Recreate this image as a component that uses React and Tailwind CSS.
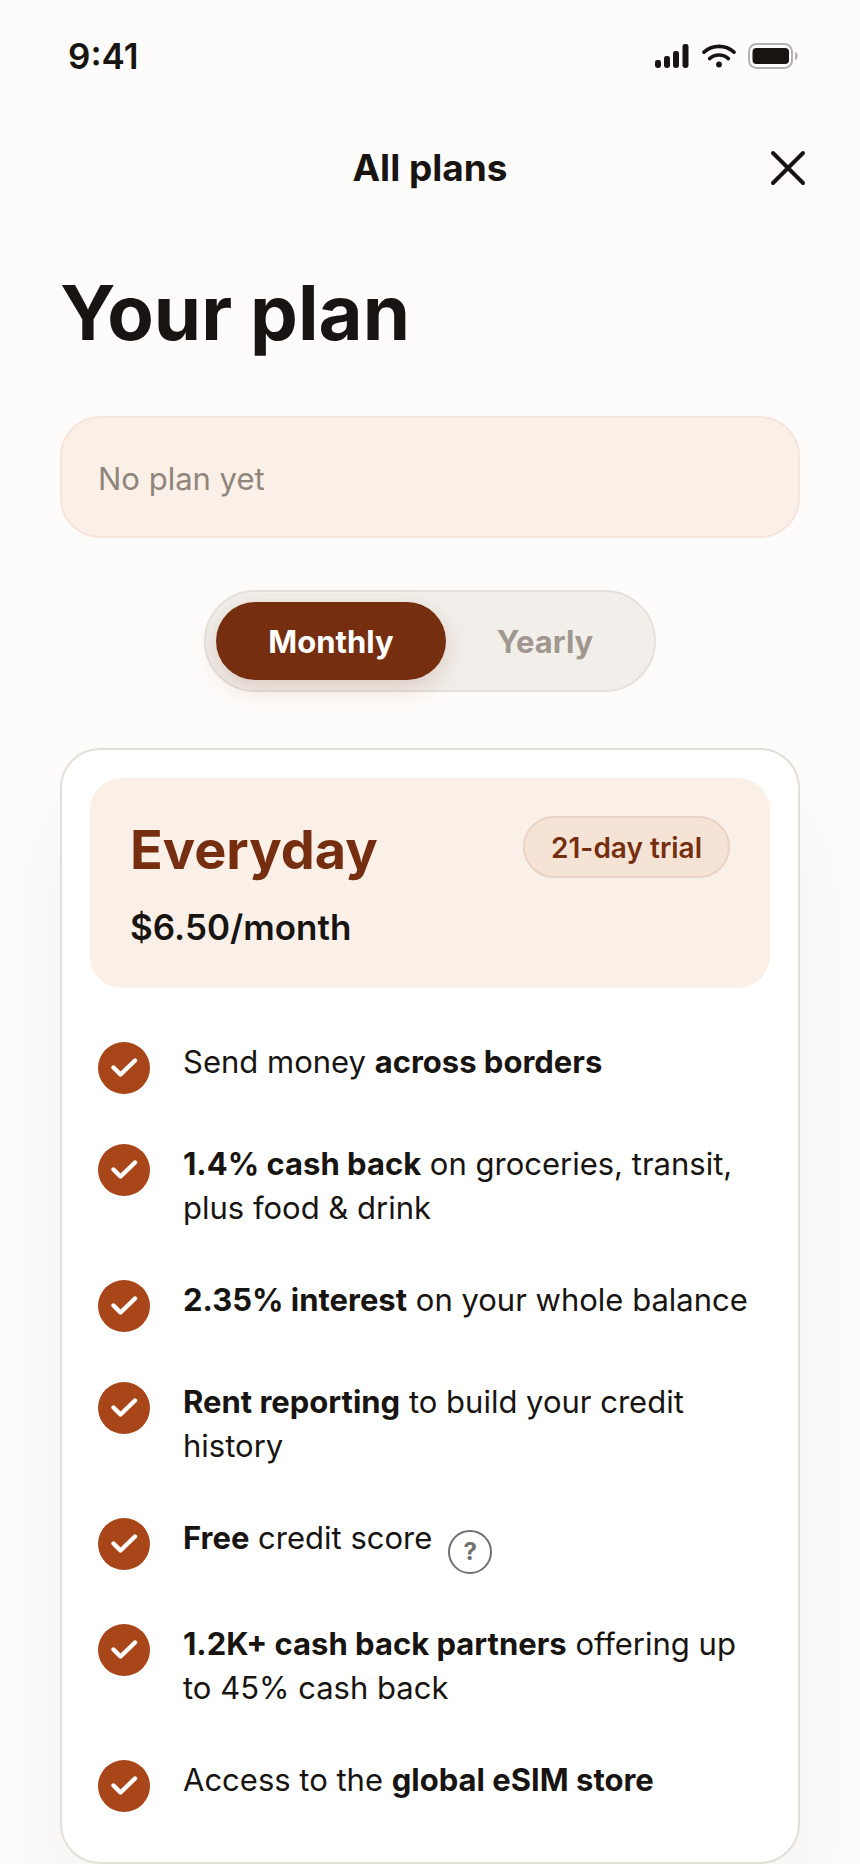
import React, { useState } from 'react';

const features = [
  { text: <>Send money <b className="font-bold">across borders</b></> },
  { text: <><b className="font-bold">1.4% cash back</b> on groceries, transit, plus food &amp; drink</> },
  { text: <><b className="font-bold">2.35% interest</b> on your whole balance</> },
  { text: <><b className="font-bold">Rent reporting</b> to build your credit history</> },
  { text: <><b className="font-bold">Free</b> credit score</>, help: true },
  { text: <><b className="font-bold">1.2K+ cash back partners</b> offering up to 45% cash back</> },
  { text: <>Access to the <b className="font-bold">global eSIM store</b></> }
];

const periods = [
  { id: 'monthly', label: 'Monthly', width: 'w-[230px]' },
  { id: 'yearly', label: 'Yearly', width: 'w-[198px]' }
];

const StatusBar = () => (
  <div className="flex h-28 items-center justify-between pr-[61px] pl-[68px]">
    <span className="text-[35px] leading-10 font-semibold">9:41</span>
    <div className="flex items-center gap-3">
      <svg width="35" height="26" viewBox="0 0 35 26" fill="currentColor" aria-hidden="true">
        <rect x="0" y="17" width="6" height="8" rx="2.4" />
        <rect x="9" y="13" width="6" height="12" rx="2.4" />
        <rect x="18" y="8" width="6" height="17" rx="2.4" />
        <rect x="27.5" y="1" width="6" height="24" rx="2.4" />
      </svg>
      <svg width="34" height="26" viewBox="0 0 34 26" fill="none" stroke="currentColor" strokeWidth="3.6" strokeLinecap="round" aria-hidden="true">
        <path d="M2 9.2C10.5 1.4 23.5 1.4 32 9.2" />
        <path d="M7.6 15.6C13 10.7 21 10.7 26.4 15.6" />
        <circle cx="17" cy="21.5" r="2.9" fill="currentColor" stroke="none" />
      </svg>
      <svg width="51" height="26" viewBox="0 0 51 26" aria-hidden="true">
        <rect x="1" y="1" width="43" height="24" rx="7.5" fill="none" stroke="#b5b3b0" strokeWidth="2" />
        <rect x="4.5" y="5" width="36.5" height="16" rx="4" fill="currentColor" />
        <path d="M47 9c3.6 1 3.6 7 0 8z" fill="#b5b3b0" />
      </svg>
    </div>
  </div>
);

const FeatureRow = ({ text, help }) => (
  <li className="flex items-start gap-[33px]">
    <span className="mt-0.5 flex size-[52px] shrink-0 items-center justify-center rounded-full bg-[#a8461a]">
      <svg width="28" height="22" viewBox="0 0 28 22" fill="none" stroke="#fff" strokeWidth="4.4" strokeLinecap="round" strokeLinejoin="round" aria-hidden="true">
        <path d="M3.5 10.5L10.5 17.5L25 3.5" />
      </svg>
    </span>
    <div className="flex items-start gap-4">
      <p className="text-[31px] leading-[44px]">{text}</p>
      {help && (
        <button
          type="button"
          aria-label="About credit score"
          className="mt-3.5 flex size-11 items-center justify-center rounded-full border-2 border-[#72706d] text-2xl font-bold text-[#72706d]"
        >
          ?
        </button>
      )}
    </div>
  </li>
);

const App = () => {
  const [period, setPeriod] = useState('monthly');

  return (
    <div className="min-h-screen overflow-hidden bg-[#fefcfa] font-['Inter',sans-serif] text-[#171411]">
      <StatusBar />

      {/* Header */}
      <header className="grid h-28 grid-cols-[1fr_auto_1fr] items-center px-[52px]">
        <h2 className="col-start-2 text-[37px] leading-[48px] font-bold">All plans</h2>
        <button type="button" aria-label="Close" className="justify-self-end">
          <svg width="40" height="40" viewBox="0 0 40 40" fill="none" stroke="currentColor" strokeWidth="4" strokeLinecap="round" aria-hidden="true">
            <path d="M5 5L35 35M35 5L5 35" />
          </svg>
        </button>
      </header>

      <main className="px-[60px]">
        {/* Current plan */}
        <h1 className="mt-10 text-[76px] leading-[96px] font-bold">Your plan</h1>
        <div className="mt-14 rounded-[40px] border-2 border-[#f5e5dc] bg-[#fbf0e8] px-9 pt-[39px] pb-[35px]">
          <p className="text-[31px] leading-[44px] text-[#8f857b]">No plan yet</p>
        </div>

        {/* Billing period */}
        <div className="mt-[52px] flex justify-center">
          <div className="flex rounded-full border-2 border-[#e5e1db] bg-[#f2efea] p-2.5">
            {periods.map((item) => (
              <button
                key={item.id}
                type="button"
                aria-pressed={period === item.id}
                onClick={() => setPeriod(item.id)}
                className={`${item.width} h-[78px] rounded-full pt-0.5 text-[31px] leading-[44px] font-bold ${
                  period === item.id
                    ? 'bg-[#752e0f] text-white shadow-[0_8px_24px_rgba(117,46,15,0.18)]'
                    : 'text-[#a09890]'
                }`}
              >
                {item.label}
              </button>
            ))}
          </div>
        </div>

        {/* Plan card */}
        <section className="mt-14 rounded-[40px] border-2 border-[#e2dfd9] bg-white px-7 pt-7 pb-[50px] shadow-[0_60px_100px_rgba(23,20,17,0.04)]">
          <div className="flex items-start justify-between rounded-[32px] bg-[#fbf0e8] px-10 py-[38px]">
            <div>
              <h3 className="text-[54px] leading-[68px] font-bold text-[#752e0f]">Everyday</h3>
              <p className="mt-5 text-[35px] leading-[46px] font-semibold">$6.50/month</p>
            </div>
            <span className="rounded-full border-2 border-[#e8d3c6] bg-[#f5e4d5] px-[26px] pt-3 pb-2.5 text-[28px] leading-9 font-semibold text-[#752e0f]">
              21-day trial
            </span>
          </div>
          <ul className="mt-[52px] flex flex-col gap-12 pl-2">
            {features.map((feature, index) => (
              <FeatureRow key={index} {...feature} />
            ))}
          </ul>
        </section>
      </main>
    </div>
  );
};

export default App;
